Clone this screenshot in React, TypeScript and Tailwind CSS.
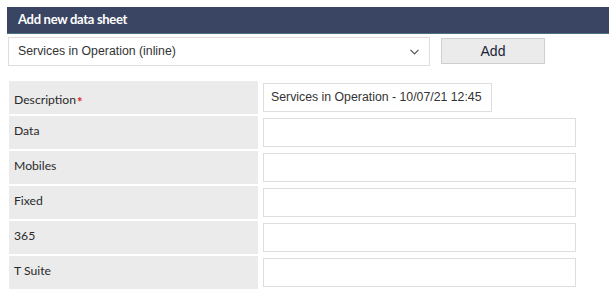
import React from "react";

const rows = [
  { label: "Description", required: true, value: "Services in Operation - 10/07/21 12:45" },
  { label: "Data" },
  { label: "Mobiles" },
  { label: "Fixed" },
  { label: "365" },
  { label: "T Suite" },
];

export default function App() {
  return (
    <div className="w-[614px] h-[301px] bg-white pt-[7px] pl-[7px] pr-[5px] overflow-hidden">
      <div className="h-[27px] bg-[#3a4563] border-b border-[#4c7480] flex items-center pl-[11px]">
        <span className="text-white font-bold text-[13px] tracking-[-0.3px]" style={{ fontFamily: "Lato, sans-serif" }}>
          Add new data sheet
        </span>
      </div>
      <div className="flex items-start mt-[3px] ml-[1px]">
        <div className="relative w-[422px] h-[29px] border border-[#dedede] bg-white flex items-center pl-[9px]">
          <span className="text-[12.3px] text-[#333] whitespace-nowrap" style={{ fontFamily: '"Liberation Sans", Arial, sans-serif' }}>
            Services in Operation (inline)
          </span>
          <svg className="absolute right-[10px] top-[11px]" width="9" height="6" viewBox="0 0 9 6">
            <path d="M0.5 0.8 L4.5 4.8 L8.5 0.8" fill="none" stroke="#555" strokeWidth="1.2" />
          </svg>
        </div>
        <div
          className="ml-[11px] mt-[1px] w-[104px] h-[26px] bg-[#ebebeb] border border-[#cfcfcf] flex items-center justify-center text-[14px] text-[#1b1f3b] font-medium"
          style={{ fontFamily: '"Liberation Sans", Arial, sans-serif' }}
        >
          Add
        </div>
      </div>
      <div className="mt-[15px] ml-[2px] flex flex-col gap-[2px]">
        {rows.map((r) => (
          <div key={r.label} className="flex h-[33px]">
            <div
              className={`w-[249px] bg-[#ebebeb] pl-[5px] text-[12.2px] text-[#2a2a2a] whitespace-nowrap ${r.required ? "pt-[9px]" : "pt-[6px]"}`}
              style={{ fontFamily: "Lato, sans-serif" }}
            >
              {r.label}
              {r.required && (
                <span className="relative top-[3px] text-[#e0241b] text-[13px] ml-[1px] font-bold">*</span>
              )}
            </div>
            <div className="ml-[5px] pt-[2px]">
              <div
                className={`h-[29px] border border-[#dedede] bg-white flex items-center pl-[7px] text-[12.3px] text-[#333] whitespace-nowrap ${r.value ? "w-[229px]" : "w-[313px]"}`}
                style={{ fontFamily: '"Liberation Sans", Arial, sans-serif' }}
              >
                {r.value ?? ""}
              </div>
            </div>
          </div>
        ))}
      </div>
    </div>
  );
}
